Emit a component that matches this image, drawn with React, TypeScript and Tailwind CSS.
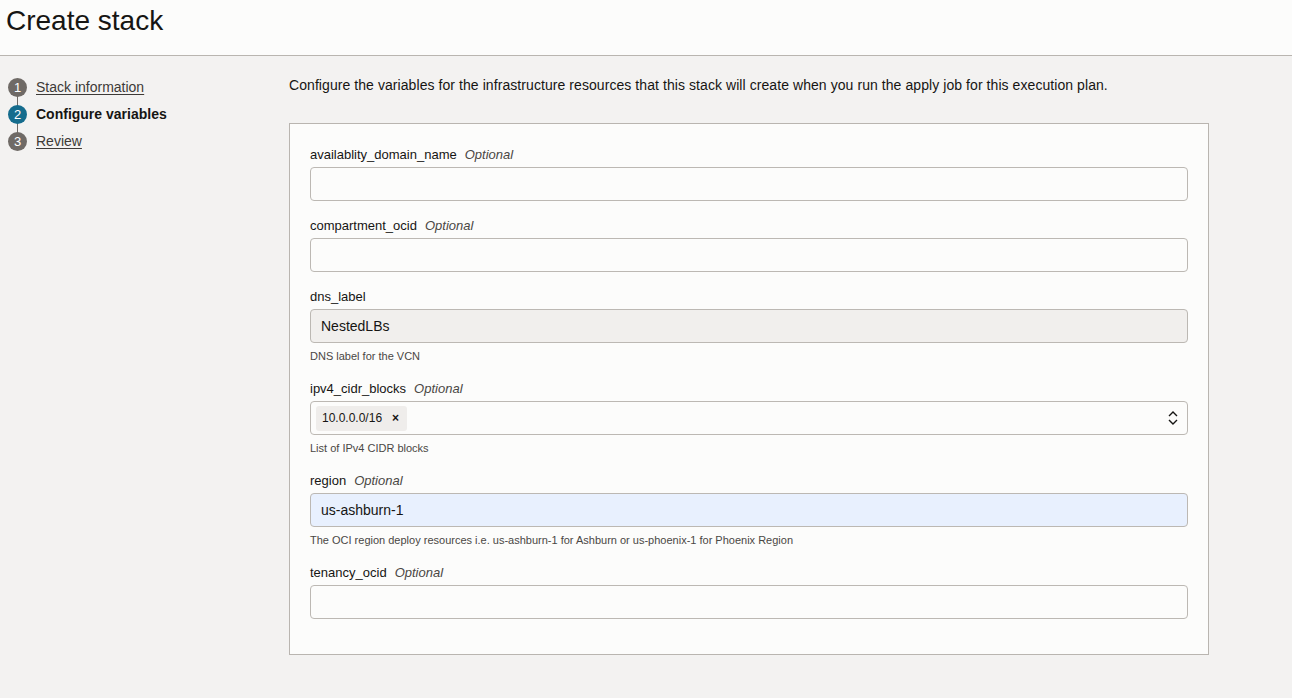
import React from "react";

const steps = [
  { n: 1, label: "Stack information", active: false },
  { n: 2, label: "Configure variables", active: true },
  { n: 3, label: "Review", active: false },
];

type Field = {
  name: string;
  optional?: boolean;
  value?: string;
  help?: string;
  kind?: "text" | "disabled" | "autofill" | "tags";
};

const fields: Field[] = [
  { name: "availablity_domain_name", optional: true },
  { name: "compartment_ocid", optional: true },
  { name: "dns_label", value: "NestedLBs", help: "DNS label for the VCN", kind: "disabled" },
  { name: "ipv4_cidr_blocks", optional: true, help: "List of IPv4 CIDR blocks", kind: "tags" },
  {
    name: "region",
    optional: true,
    value: "us-ashburn-1",
    help: "The OCI region deploy resources i.e. us-ashburn-1 for Ashburn or us-phoenix-1 for Phoenix Region",
    kind: "autofill",
  },
  { name: "tenancy_ocid", optional: true },
];

function FieldRow({ f }: { f: Field }) {
  let box = "bg-[#fcfcfb]";
  if (f.kind === "disabled") box = "bg-[#f1efed]";
  if (f.kind === "autofill") box = "bg-[#e8f0fe]";
  return (
    <div className="mb-[16px]">
      <div className="h-[18px] leading-[18px] text-[13px] text-[#161513] mb-[3px]">
        {f.name}
        {f.optional && <span className="italic text-[#4a4744] ml-[8px]">Optional</span>}
      </div>
      <div
        className={`h-[34px] rounded-[4px] border border-[#bcb8b3] flex items-center px-[10px] text-[14px] text-[#161513] ${box} ${
          f.kind === "disabled" ? "text-[#4a4744]" : ""
        }`}
      >
        {f.kind === "tags" ? (
          <>
            <div className="flex-1 flex items-center">
              <span className="-ml-[5px] h-[25px] rounded-[3px] bg-[#efedeb] flex items-center pl-[6px] pr-[8px] text-[12px] text-[#161513]">
                10.0.0.0/16
                <span className="ml-[10px] text-[12px] font-bold">×</span>
              </span>
            </div>
            <svg width="12" height="18" viewBox="0 0 12 18" fill="none" stroke="#161513" strokeWidth="1.4" className="-mr-[2px]">
              <path d="M2 7 L6 3 L10 7" />
              <path d="M2 11 L6 15 L10 11" />
            </svg>
          </>
        ) : (
          f.value
        )}
      </div>
      {f.help && (
        <div className="mt-[5px] mb-[1px] leading-[16px] text-[11px] text-[#4a4744]">{f.help}</div>
      )}
    </div>
  );
}

export default function App() {
  return (
    <div
      className="min-h-[698px] bg-[#f3f2f1] text-[#161513]"
      style={{ fontFamily: '"Liberation Sans", Arial, sans-serif' }}
    >
      <header className="h-[56px] bg-[#fcfcfb] border-b border-[#b9b5b0] px-[6px] pt-[4px]">
        <h1 className="text-[28px] leading-[34px] font-normal">Create stack</h1>
      </header>

      <div className="flex">
        <nav className="w-[289px] shrink-0 pl-[8px] pt-[18px]">
          {steps.map((s, i) => (
            <div key={s.n} className="relative h-[27px] flex items-center">
              {i < steps.length - 1 && (
                <div className="absolute left-[9px] top-[18px] h-[18px] w-px bg-[#6f6a66]" />
              )}
              <div
                className={`relative w-[19px] h-[19px] rounded-full flex items-center justify-center text-white text-[13px] ${
                  s.active ? "bg-[#156c8d]" : "bg-[#6f6a66]"
                }`}
              >
                {s.n}
              </div>
              <span
                className={`ml-[9px] text-[14px] ${
                  s.active ? "font-bold text-[#161513]" : "underline underline-offset-2 text-[#3d3a37]"
                }`}
              >
                {s.label}
              </span>
            </div>
          ))}
        </nav>

        <main className="w-[920px] pt-[20px]">
          <p className="text-[14px] leading-[18px] text-[#161513] tracking-[0.005em]">
            Configure the variables for the infrastructure resources that this stack will create when you run the apply job for this execution plan.
          </p>
          <div className="mt-[29px] bg-[#fcfcfb] border border-[#b9b5b0] px-[20px] pt-[22px] pb-[19px]">
            {fields.map((f) => (
              <FieldRow key={f.name} f={f} />
            ))}
          </div>
        </main>
      </div>
    </div>
  );
}
